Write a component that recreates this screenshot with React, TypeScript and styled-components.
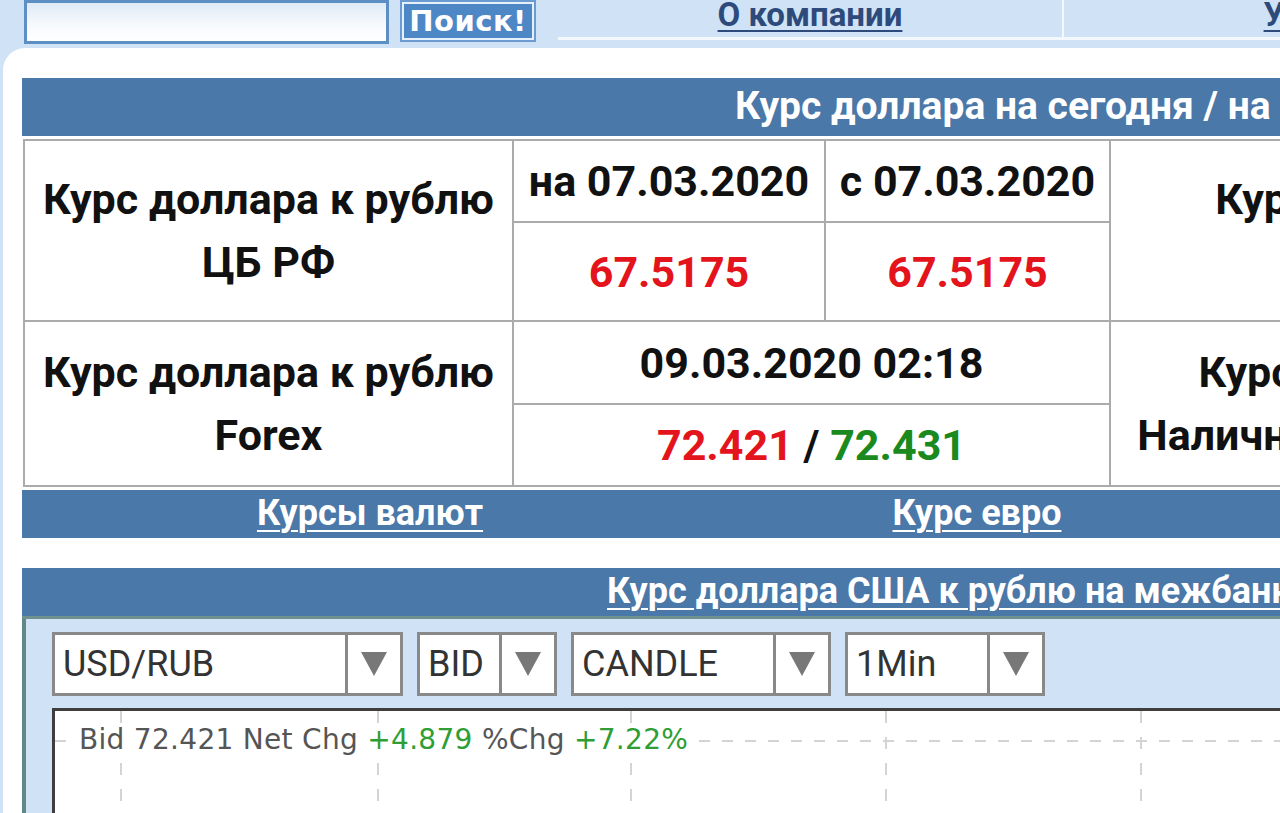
import React from 'react';
import styled, { createGlobalStyle } from 'styled-components';

const GlobalStyle = createGlobalStyle`
  html, body {
    margin: 0;
    padding: 0;
    background: #cfe2f6;
    overflow: hidden;
  }
  body {
    font-family: Roboto, "Liberation Sans", Arial, sans-serif;
    color: #111;
  }
`;

const blue = '#4a78a8';

const Page = styled.div`
  width: 1280px;
  height: 813px;
  overflow: hidden;
`;

const TopBar = styled.div`
  display: flex;
  height: 48px;
`;

const SearchForm = styled.div`
  flex: 0 0 auto;
  display: flex;
  align-items: flex-start;
  gap: 11px;
  width: 534px;
  padding-left: 24px;
`;

const SearchInput = styled.div`
  box-sizing: border-box;
  width: 365px;
  height: 44px;
  border: 3px solid #5e8fc4;
  background: linear-gradient(#dfeaf6, #f7fafd 60%, #ffffff);
`;

const SearchButton = styled.div`
  box-sizing: border-box;
  width: 136px;
  height: 42px;
  border: 2px solid #6b9bd0;
  outline: 2px solid #e6f0fa;
  outline-offset: -4px;
  background: #4e87c6;
  color: #fff;
  font-family: "DejaVu Sans", Verdana, sans-serif;
  font-weight: bold;
  font-size: 29px;
  line-height: 38px;
  text-align: center;
  letter-spacing: 0.5px;
`;

const Nav = styled.div`
  flex: 1;
  min-width: 0;
  display: flex;
  flex-direction: column;
`;

const NavRow = styled.div`
  display: flex;
  height: 37px;
  border-bottom: 3px solid #f3f8fd;
`;

const NavItem = styled.div`
  flex: 0 0 504px;
  text-align: center;
  line-height: 30px;
  & + & {
    border-left: 2px solid #f3f8fd;
  }
`;

const NavLink = styled.a`
  color: #2d4a7b;
  font-size: 33px;
  font-weight: bold;
  text-decoration: underline;
  text-underline-offset: 4px;
  text-decoration-thickness: 2px;
  white-space: nowrap;
`;

const Panel = styled.div`
  margin-left: 3px;
  background: #fff;
  border-top-left-radius: 22px;
  padding: 30px 0 0 19px;
  height: 800px;
  width: 1800px;
`;

const BlueBar = styled.div<{ $pad: number }>`
  height: 58px;
  background: ${blue};
  color: #fff;
  font-weight: bold;
  font-size: 39px;
  line-height: 56px;
  padding-left: ${(p) => p.$pad}px;
  white-space: nowrap;
`;

const RateTable = styled.div`
  margin: 3px 0 0 1px;
  display: grid;
  grid-template-columns: 487px 310px 283px 626px;
  grid-template-rows: 80px 97px 81px 80px;
  gap: 2px;
  padding: 2px;
  width: max-content;
  background: #ababab;
`;

const Cell = styled.div<{ $col: string; $row: string }>`
  grid-column: ${(p) => p.$col};
  grid-row: ${(p) => p.$row};
  background: #fff;
  display: flex;
  flex-direction: column;
  align-items: center;
  justify-content: center;
  text-align: center;
  font-weight: bold;
  font-size: 43px;
  white-space: nowrap;
`;

const Label = styled.div`
  line-height: 63px;
`;

const Value = styled.span<{ $tone?: 'red' | 'green' }>`
  color: ${(p) => (p.$tone === 'red' ? '#e3141b' : p.$tone === 'green' ? '#1a8a1f' : '#111')};
  font-size: 43px;
`;

const LinkBar = styled.div`
  margin-top: 3px;
  display: grid;
  grid-template-columns: 696px 518px 600px;
  height: 48px;
  background: ${blue};
`;

const BarLink = styled.a`
  color: #fff;
  font-weight: bold;
  font-size: 36px;
  line-height: 46px;
  text-align: center;
  text-decoration: underline;
  text-underline-offset: 5px;
  text-decoration-thickness: 2px;
  white-space: nowrap;
`;

const ChartBlock = styled.div`
  margin-top: 30px;
`;

const ChartTitle = styled(BlueBar)`
  font-size: 36px;
  line-height: 46px;
  height: 48px;
  border-bottom: 3px solid #6f928f;
`;

const TitleLink = styled.a`
  color: #fff;
  text-decoration: underline;
  text-underline-offset: 5px;
  text-decoration-thickness: 2px;
`;

const ChartPanel = styled.div`
  background: #cfe2f6;
  border-left: 4px solid #5e8986;
  padding: 13px 0 0 26px;
`;

const Toolbar = styled.div`
  display: flex;
  gap: 14px;
  height: 64px;
`;

const Select = styled.div<{ $w: number }>`
  box-sizing: border-box;
  width: ${(p) => p.$w}px;
  display: flex;
  border: 3px solid #898989;
  background: #fff;
  color: #333;
  font-size: 36px;
  line-height: 58px;
`;

const SelectText = styled.div`
  flex: 1;
  padding-left: 8px;
`;

const SelectArrow = styled.div`
  width: 52px;
  border-left: 3px solid #898989;
  display: flex;
  align-items: center;
  justify-content: center;
`;

const ChartArea = styled.div`
  position: relative;
  margin-top: 12px;
  height: 200px;
  background: #fff;
  border-top: 3px solid #3e3e3e;
  border-left: 3px solid #3e3e3e;
`;

const Legend = styled.div`
  position: absolute;
  left: 22px;
  top: 12px;
  padding: 0 2px;
  background: #fff;
  font-family: "DejaVu Sans", Verdana, sans-serif;
  font-size: 28px;
  letter-spacing: 0.3px;
  line-height: 34px;
  color: #555;
  white-space: nowrap;
`;

const Up = styled.span`
  color: #2f9e35;
`;

const Arrow = () => (
  <svg width="26" height="24" viewBox="0 0 26 24">
    <polygon points="0,0 26,0 13,24" fill="#787878" />
  </svg>
);

const selects = [
  { label: 'USD/RUB', w: 351 },
  { label: 'BID', w: 140 },
  { label: 'CANDLE', w: 260 },
  { label: '1Min', w: 200 },
];

const gridX = [66, 323, 576, 831, 1086];

const App: React.FC = () => {
  return (
    <Page>
      <GlobalStyle />
      <TopBar>
        <SearchForm>
          <SearchInput />
          <SearchButton>Поиск!</SearchButton>
        </SearchForm>
        <Nav>
          <NavRow>
            <NavItem><NavLink href="#">О компании</NavLink></NavItem>
            <NavItem><NavLink href="#">Услуги</NavLink></NavItem>
          </NavRow>
        </Nav>
      </TopBar>

      <Panel>
        <BlueBar $pad={713}>Курс доллара на сегодня / на завтра</BlueBar>

        <RateTable>
          <Cell $col="1" $row="1 / 3">
            <Label>Курс доллара к рублю</Label>
            <Label>ЦБ РФ</Label>
          </Cell>
          <Cell $col="2" $row="1">на 07.03.2020</Cell>
          <Cell $col="3" $row="1">с 07.03.2020</Cell>
          <Cell $col="4" $row="1 / 3">
            <Label>Курс доллара к евро</Label>
            <Label>ЦБ РФ</Label>
          </Cell>
          <Cell $col="2" $row="2"><Value $tone="red">67.5175</Value></Cell>
          <Cell $col="3" $row="2"><Value $tone="red">67.5175</Value></Cell>

          <Cell $col="1" $row="3 / 5">
            <Label>Курс доллара к рублю</Label>
            <Label>Forex</Label>
          </Cell>
          <Cell $col="2 / 4" $row="3">09.03.2020 02:18</Cell>
          <Cell $col="4" $row="3 / 5">
            <Label>Курс доллара к рублю</Label>
            <Label>Наличный курс в банках РФ</Label>
          </Cell>
          <Cell $col="2 / 4" $row="4">
            <div>
              <Value $tone="red">72.421</Value> / <Value $tone="green">72.431</Value>
            </div>
          </Cell>
        </RateTable>

        <LinkBar>
          <BarLink href="#">Курсы валют</BarLink>
          <BarLink href="#">Курс евро</BarLink>
          <BarLink href="#">Курс юаня</BarLink>
        </LinkBar>

        <ChartBlock>
          <ChartTitle $pad={585}>
            <TitleLink href="#">Курс доллара США к рублю на межбанковском рынке</TitleLink>
          </ChartTitle>
          <ChartPanel>
            <Toolbar>
              {selects.map((s) => (
                <Select key={s.label} $w={s.w}>
                  <SelectText>{s.label}</SelectText>
                  <SelectArrow><Arrow /></SelectArrow>
                </Select>
              ))}
            </Toolbar>
            <ChartArea>
              <svg width="1300" height="200">
                <line x1="0" y1="30" x2="1300" y2="30" stroke="#d4d4d4" strokeWidth="2" strokeDasharray="11 12" />
                {gridX.map((x) => (
                  <line key={x} x1={x} y1="0" x2={x} y2="200" stroke="#d4d4d4" strokeWidth="2" strokeDasharray="12 14" />
                ))}
              </svg>
              <Legend>
                Bid 72.421 Net Chg <Up>+4.879</Up> %Chg <Up>+7.22%</Up>
              </Legend>
            </ChartArea>
          </ChartPanel>
        </ChartBlock>
      </Panel>
    </Page>
  );
};

export default App;
